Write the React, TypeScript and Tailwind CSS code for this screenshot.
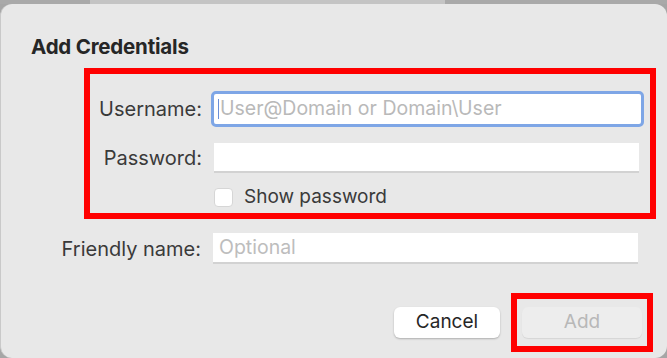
import React, { useState } from 'react';

const font = { fontFamily: 'Inter, "Noto Sans", sans-serif' };

const App: React.FC = () => {
  const [show, setShow] = useState(false);

  return (
    <div className="w-[667px] h-[358px] overflow-hidden bg-[#a6a6a6] flex flex-col" style={font}>
      {/* strip of the window behind the sheet */}
      <div className="flex h-[4px] shrink-0">
        <div className="w-[90px] bg-[#a9a9a9]"></div>
        <div className="w-[355px] bg-[#c4c4c4]"></div>
        <div className="flex-1 bg-[#a9a9a9]"></div>
      </div>

      <div className="h-[354px] shrink-0 rounded-t-[12px] rounded-b-[12px] bg-[#e8e8e8] border-l border-[#c9c9c9] flex flex-col">
        <h1 className="pl-[30px] pt-[33px] text-[20.5px] leading-[20px] font-bold text-[#262626] tracking-[-0.2px]">
          Add Credentials
        </h1>

        {/* highlighted block */}
        <div className="ml-[83px] mt-[11px] w-[572px] h-[151px] border-[6px] border-[#ff0000] flex flex-col">
          <div className="flex items-center mt-[17px]">
            <label className="w-[112px] text-right text-[20px] text-[#3a3a3a]">Username:</label>
            <div className="ml-[9px] w-[433px] h-[36px] rounded-[5px] border-[3px] border-[#7ea6e6] bg-white flex items-center pl-[4px]">
              <span className="w-[1px] h-[20px] bg-[#6a8fd8]"></span>
              <span className="text-[19.5px] text-[#b9b9b9] ml-[1px]">User@Domain or Domain\User</span>
            </div>
          </div>
          <div className="flex items-center mt-[16px]">
            <label className="w-[112px] text-right text-[20px] text-[#3a3a3a]">Password:</label>
            <div className="ml-[12px] w-[425px] h-[30px] bg-white border-b-[2px] border-[#d2d2d2]"></div>
          </div>
          <div className="flex items-center mt-[10px] ml-[124px]">
            <button
              onClick={() => setShow(!show)}
              className="w-[19px] h-[19px] rounded-[4px] bg-white border border-[#d6d6d6]"
            ></button>
            <span className="ml-[11px] text-[19px] text-[#3a3a3a]">Show password</span>
          </div>
        </div>

        <div className="flex items-center mt-[14px]">
          <label className="w-[200px] text-right text-[20px] text-[#3a3a3a]">Friendly name:</label>
          <div className="ml-[12px] w-[425px] h-[31px] bg-white border-b-[2px] border-[#d2d2d2] flex items-center pl-[6px]">
            <span className="text-[19.5px] text-[#bdbdbd]">Optional</span>
          </div>
        </div>

        <div className="flex items-center mt-[29px] ml-[393px]">
          <button className="w-[106px] h-[31px] rounded-[6px] bg-white shadow-[0_1px_2px_rgba(0,0,0,0.25)] text-[19px] text-[#262626]">
            Cancel
          </button>
          <div className="ml-[11px] w-[142px] h-[59px] border-[6px] border-[#ff0000] flex items-center justify-center">
            <button className="w-[120px] h-[31px] rounded-[6px] bg-[#ededed] shadow-[0_1px_1px_rgba(0,0,0,0.08)] text-[19px] text-[#b8b8b8]">
              Add
            </button>
          </div>
        </div>
      </div>
    </div>
  );
};

export default App;
